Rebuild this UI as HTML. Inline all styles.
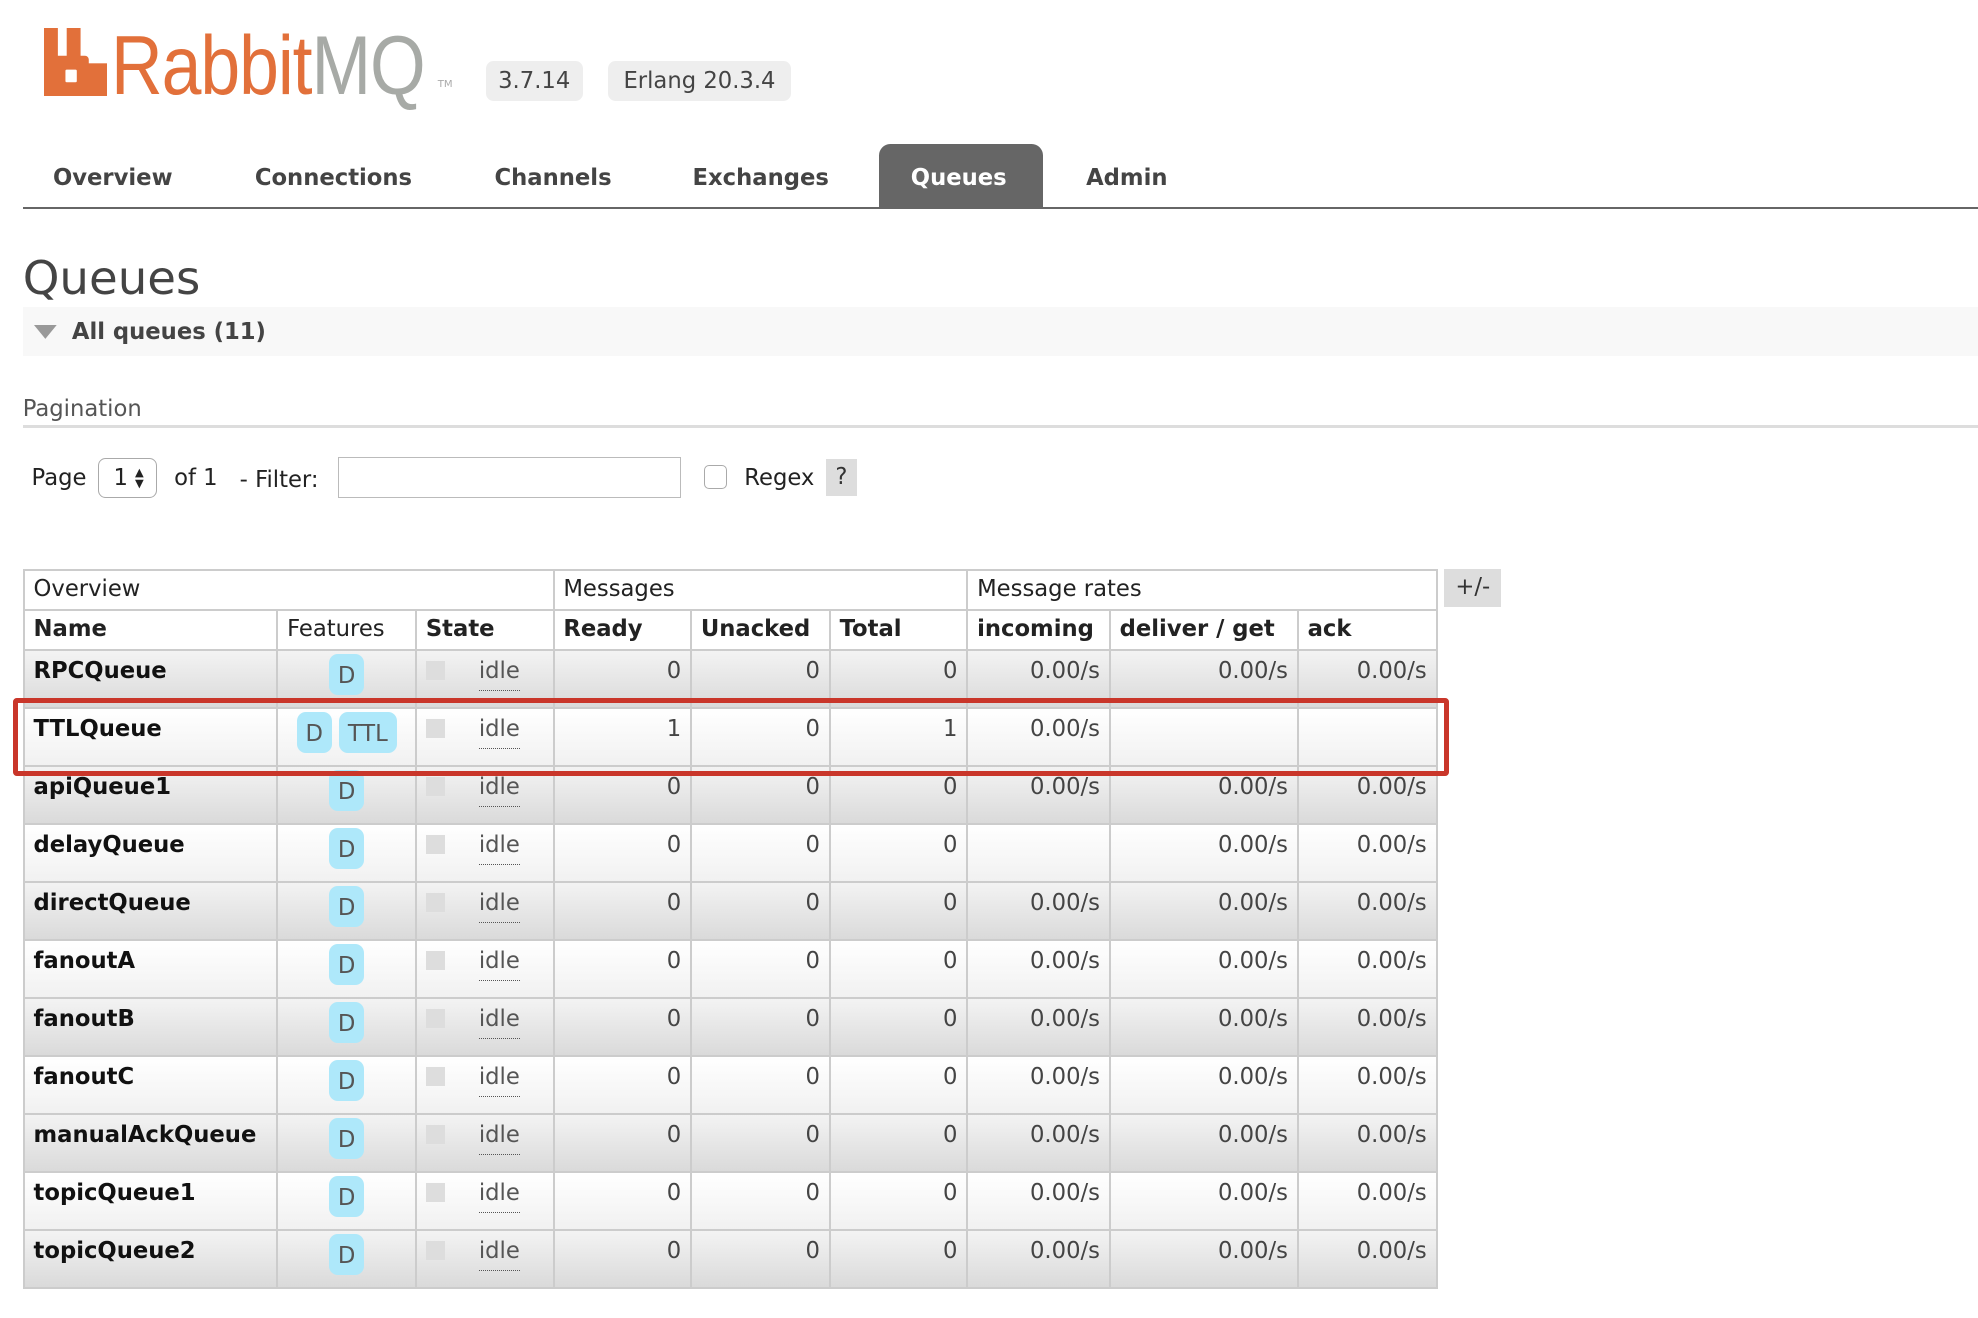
<!DOCTYPE html>
<html><head><meta charset="utf-8">
<style>
html,body{margin:0;padding:0;background:#fff;overflow:hidden}
#w{zoom:1.26148;width:1568px;height:1045px;position:relative;font-family:"DejaVu Sans","Liberation Sans",sans-serif;color:#484848;font-size:18px}
.a{position:absolute;white-space:nowrap}
.badge{background:#eee;border-radius:6px;height:32px;line-height:33px;text-align:center;color:#444;font-size:18px}
.nav{font-weight:bold;font-size:18px;color:#444;top:131px}
table{position:absolute;left:18px;top:451px;border-collapse:collapse;table-layout:fixed;width:1120px}
td,th{border:2px solid #ccc;padding:0 7px;height:44.4px;vertical-align:top;line-height:32px;font-size:18px;color:#222;overflow:hidden;white-space:nowrap}
th{height:28px;line-height:30px;text-align:left}
.h1 th{font-weight:normal}
tr.o td{background:linear-gradient(#f3f3f3,#dadada)}
tr.e td{background:linear-gradient(#fff,#f1f1f1)}
td.n{font-weight:bold;color:#111}
td.r{text-align:right;color:#444}
td.f{text-align:center;padding:0}
.d{display:inline-block;background:#aee8fa;border-radius:7px;height:32px;line-height:36px;padding:0 7px;color:#555;margin-top:3px}
td.s{position:relative;color:#555}
.sq{position:absolute;left:7px;top:8px;width:15px;height:15px;background:#ddd}
.idle{position:absolute;left:49px;top:3px;border-bottom:1px dotted #555;line-height:28px}
</style></head><body><div id="w">
<svg class="a" style="left:35px;top:22px" width="50" height="54" viewBox="0 0 50 54"><path d="M0 0h11v22h7V0h11v22h3.5a3 3 0 0 1 3 3v29H0z" fill="#e2703a"/><rect x="29" y="28" width="21" height="26" fill="#e2703a"/><rect x="17" y="33" width="9" height="10" rx="1" fill="#fff"/></svg>
<div class="a" style="left:88px;top:14px;font-family:'Liberation Sans',sans-serif;font-size:66px;transform:scaleX(0.86);transform-origin:0 0;letter-spacing:-1px"><span style="color:#e2703a">Rabbit</span><span style="color:#a7aaa6">MQ</span></div>
<div class="a" style="left:347px;top:63px;font-size:8px;color:#aaa">TM</div>
<div class="a badge" style="left:385px;top:48px;width:77px">3.7.14</div>
<div class="a badge" style="left:482px;top:48px;width:145px">Erlang 20.3.4</div>
<div class="a nav" style="left:42px">Overview</div>
<div class="a nav" style="left:202px">Connections</div>
<div class="a nav" style="left:392px">Channels</div>
<div class="a nav" style="left:549px">Exchanges</div>
<div class="a" style="left:697px;top:114px;width:130px;height:51px;background:#666;border-radius:9px 9px 0 0"></div>
<div class="a nav" style="left:722px;color:#fff">Queues</div>
<div class="a nav" style="left:861px">Admin</div>
<div class="a" style="left:18px;top:164px;width:1550px;height:2px;background:#666"></div>
<div class="a" style="left:18px;top:200px;font-size:37px;color:#444">Queues</div>
<div class="a" style="left:18px;top:243px;width:1550px;height:39px;background:#f8f8f8"></div>
<svg class="a" style="left:27px;top:258px" width="18" height="11"><path d="M0 0h18L9 11z" fill="#999"/></svg>
<div class="a" style="left:57px;top:253px;font-weight:bold;color:#444">All queues (11)</div>
<div class="a" style="left:18px;top:314px;color:#555;font-size:18px">Pagination</div>
<div class="a" style="left:18px;top:337px;width:1550px;height:2px;background:#ddd"></div>
<div class="a" style="left:25px;top:369px;color:#222">Page</div>
<div class="a" style="left:78px;top:363px;width:45px;height:30px;border:1px solid #aaa;border-radius:6px"></div>
<div class="a" style="left:90px;top:369px;color:#222">1</div>
<div class="a" style="left:107px;top:370px;font-size:9px;line-height:9px;color:#222">▲<br>▼</div>
<div class="a" style="left:138px;top:369px;color:#222">of 1</div>
<div class="a" style="left:190px;top:370px;color:#222">- Filter:</div>
<div class="a" style="left:268px;top:362px;width:270px;height:31px;border:1px solid #bbb"></div>
<div class="a" style="left:558px;top:369px;width:17px;height:17px;border:1px solid #aaa;border-radius:4px"></div>
<div class="a" style="left:590px;top:369px;color:#222">Regex</div>
<div class="a" style="left:655px;top:364px;width:24px;height:29px;background:#ddd;text-align:center;line-height:29px;color:#333">?</div>
<div class="a" style="left:1145px;top:451px;width:45px;height:30px;background:#ddd;text-align:center;line-height:30px;color:#333">+/-</div>
<table>
<colgroup><col style="width:201px"><col style="width:110px"><col style="width:109px"><col style="width:109px"><col style="width:110px"><col style="width:109px"><col style="width:113px"><col style="width:149px"><col style="width:110px"></colgroup>
<tr class="h1"><th colspan="3">Overview</th><th colspan="3">Messages</th><th colspan="3">Message rates</th></tr>
<tr><th>Name</th><th style="font-weight:normal">Features</th><th>State</th><th>Ready</th><th>Unacked</th><th>Total</th><th>incoming</th><th>deliver / get</th><th>ack</th></tr>
<tr class="o"><td class="n">RPCQueue</td><td class="f"><span class="d">D</span></td><td class="s"><span class="sq"></span><span class="idle">idle</span></td><td class="r">0</td><td class="r">0</td><td class="r">0</td><td class="r">0.00/s</td><td class="r">0.00/s</td><td class="r">0.00/s</td></tr>
<tr class="e"><td class="n">TTLQueue</td><td class="f"><span class="d">D</span> <span class="d">TTL</span></td><td class="s"><span class="sq"></span><span class="idle">idle</span></td><td class="r">1</td><td class="r">0</td><td class="r">1</td><td class="r">0.00/s</td><td class="r"></td><td class="r"></td></tr>
<tr class="o"><td class="n">apiQueue1</td><td class="f"><span class="d">D</span></td><td class="s"><span class="sq"></span><span class="idle">idle</span></td><td class="r">0</td><td class="r">0</td><td class="r">0</td><td class="r">0.00/s</td><td class="r">0.00/s</td><td class="r">0.00/s</td></tr>
<tr class="e"><td class="n">delayQueue</td><td class="f"><span class="d">D</span></td><td class="s"><span class="sq"></span><span class="idle">idle</span></td><td class="r">0</td><td class="r">0</td><td class="r">0</td><td class="r"></td><td class="r">0.00/s</td><td class="r">0.00/s</td></tr>
<tr class="o"><td class="n">directQueue</td><td class="f"><span class="d">D</span></td><td class="s"><span class="sq"></span><span class="idle">idle</span></td><td class="r">0</td><td class="r">0</td><td class="r">0</td><td class="r">0.00/s</td><td class="r">0.00/s</td><td class="r">0.00/s</td></tr>
<tr class="e"><td class="n">fanoutA</td><td class="f"><span class="d">D</span></td><td class="s"><span class="sq"></span><span class="idle">idle</span></td><td class="r">0</td><td class="r">0</td><td class="r">0</td><td class="r">0.00/s</td><td class="r">0.00/s</td><td class="r">0.00/s</td></tr>
<tr class="o"><td class="n">fanoutB</td><td class="f"><span class="d">D</span></td><td class="s"><span class="sq"></span><span class="idle">idle</span></td><td class="r">0</td><td class="r">0</td><td class="r">0</td><td class="r">0.00/s</td><td class="r">0.00/s</td><td class="r">0.00/s</td></tr>
<tr class="e"><td class="n">fanoutC</td><td class="f"><span class="d">D</span></td><td class="s"><span class="sq"></span><span class="idle">idle</span></td><td class="r">0</td><td class="r">0</td><td class="r">0</td><td class="r">0.00/s</td><td class="r">0.00/s</td><td class="r">0.00/s</td></tr>
<tr class="o"><td class="n">manualAckQueue</td><td class="f"><span class="d">D</span></td><td class="s"><span class="sq"></span><span class="idle">idle</span></td><td class="r">0</td><td class="r">0</td><td class="r">0</td><td class="r">0.00/s</td><td class="r">0.00/s</td><td class="r">0.00/s</td></tr>
<tr class="e"><td class="n">topicQueue1</td><td class="f"><span class="d">D</span></td><td class="s"><span class="sq"></span><span class="idle">idle</span></td><td class="r">0</td><td class="r">0</td><td class="r">0</td><td class="r">0.00/s</td><td class="r">0.00/s</td><td class="r">0.00/s</td></tr>
<tr class="o"><td class="n">topicQueue2</td><td class="f"><span class="d">D</span></td><td class="s"><span class="sq"></span><span class="idle">idle</span></td><td class="r">0</td><td class="r">0</td><td class="r">0</td><td class="r">0.00/s</td><td class="r">0.00/s</td><td class="r">0.00/s</td></tr>
</table>
<div class="a" style="left:10px;top:553px;width:1131px;height:54px;border:4px solid #c9362a;border-radius:3px"></div>
</div></body></html>
